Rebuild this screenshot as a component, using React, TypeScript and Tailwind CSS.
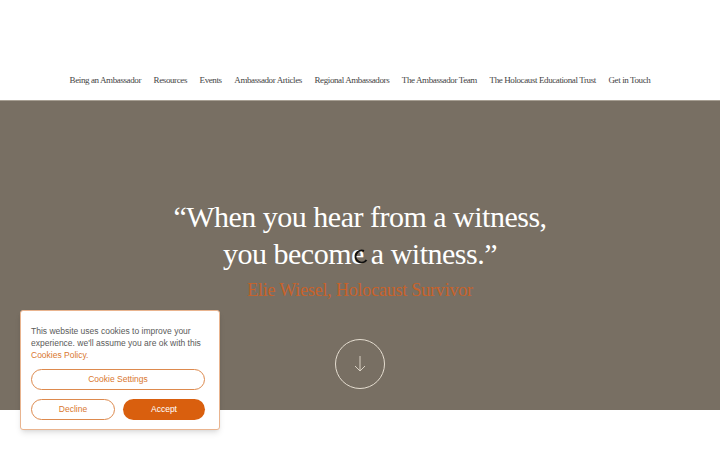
import React from "react";

const navItems = [
  "Being an Ambassador",
  "Resources",
  "Events",
  "Ambassador Articles",
  "Regional Ambassadors",
  "The Ambassador Team",
  "The Holocaust Educational Trust",
  "Get in Touch",
];

const serif = { fontFamily: '"Liberation Serif", "DejaVu Serif", serif' };
const sans = { fontFamily: '"Liberation Sans", Arial, sans-serif' };

export default function App() {
  return (
    <div className="w-[720px] h-[450px] bg-white overflow-hidden relative">
      <header className="h-[100px] flex items-end justify-center pb-[15px]">
        <nav className="flex items-center gap-[12.6px]" style={serif}>
          {navItems.map((item) => (
            <a
              key={item}
              href="#"
              className="text-[9px] tracking-[-0.4px] text-[#444] leading-none"
            >
              {item}
            </a>
          ))}
        </nav>
      </header>

      <section className="h-[310px] bg-[#786f63] border-t border-[#a79f93] flex flex-col items-center pt-[97px] relative">
        <h1
          className="text-white text-center text-[30px] leading-[37px] font-light tracking-[-0.5px]"
          style={serif}
        >
          “When you hear from a witness,
          <br />
          you become a witness.”
        </h1>
        <p
          className="mt-[6px] text-[18px] text-[#c8622a] tracking-[-0.2px] leading-[24px]"
          style={serif}
        >
          Elie Wiesel, Holocaust Survivor
        </p>
        <button className="mt-[37px] w-[50px] h-[50px] rounded-full border border-[#e5ddd0] flex items-center justify-center">
          <svg width="14" height="18" viewBox="0 0 14 18" fill="none" stroke="#d9d1c4" strokeWidth="1">
            <path d="M7 1 V16" />
            <path d="M2 11 L7 16 L12 11" />
          </svg>
        </button>

        <svg
          className="absolute left-[354px] top-[148px]"
          width="15"
          height="15"
          viewBox="0 0 15 15"
          fill="none"
        >
          <path d="M10 2 A6 6 0 1 0 12.5 11" stroke="#111" strokeWidth="2" />
        </svg>
      </section>

      <div
        className="absolute left-[20px] top-[310px] w-[200px] bg-white border border-[#e9b48f] rounded-[3px] shadow-md pl-[10px] pr-[14px] pt-[14px] pb-[9px]"
        style={sans}
      >
        <p className="text-[8.5px] leading-[12px] text-[#5a5a5a]">
          This website uses cookies to improve your experience. we'll assume
          you are ok with this{" "}
          <a href="#" className="text-[#d9772f]">
            Cookies Policy.
          </a>
        </p>
        <button className="mt-[8px] w-full h-[21px] rounded-full border border-[#dd8a4e] text-[#d9772f] text-[8.5px]">
          Cookie Settings
        </button>
        <div className="mt-[9px] flex gap-[8px]">
          <button className="flex-1 h-[21px] rounded-full border border-[#dd8a4e] text-[#d9772f] text-[8.5px]">
            Decline
          </button>
          <button className="flex-1 h-[21px] rounded-full bg-[#d95f0e] text-white text-[8.5px]">
            Accept
          </button>
        </div>
      </div>
    </div>
  );
}
